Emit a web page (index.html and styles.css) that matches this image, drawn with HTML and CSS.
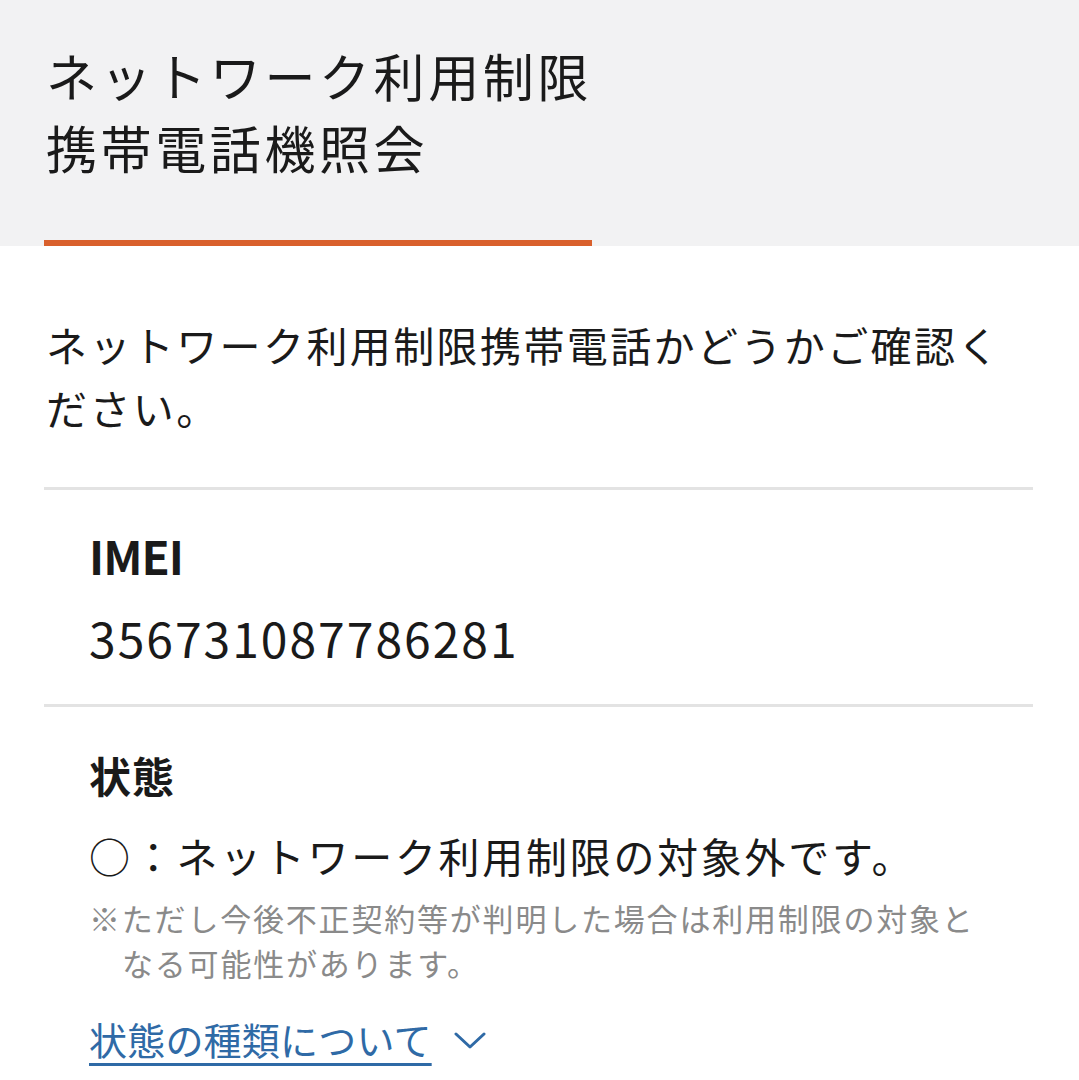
FILE: index.html
```html
<!DOCTYPE html>
<html lang="ja">
<head>
<meta charset="utf-8">
<title>ネットワーク利用制限携帯電話機照会</title>
<link rel="stylesheet" href="styles.css">
</head>
<body>
<header class="page-head">
  <h1 class="page-title">ネットワーク利用制限<br>携帯電話機照会</h1>
  <div class="accent"></div>
</header>
<main class="content">
  <p class="intro">ネットワーク利用制限携帯電話かどうかご確認ください。</p>
  <section class="item item-imei">
    <h2 class="label">IMEI</h2>
    <p class="value">356731087786281</p>
  </section>
  <section class="item item-status">
    <h2 class="label label-jp">状態</h2>
    <p class="status">○：ネットワーク利用制限の対象外です。</p>
    <p class="note">※ただし今後不正契約等が判明した場合は利用制限の対象となる可能性があります。</p>
    <a class="more" href="#"><span class="more-text">状態の種類について</span><svg class="chev" viewBox="0 0 32 18" width="32" height="18"><path d="M2 2 L16 15 L30 2" fill="none" stroke="#2f6aa6" stroke-width="3" stroke-linecap="round" stroke-linejoin="round"/></svg></a>
  </section>
</main>
</body>
</html>
```
FILE: styles.css
```css
html, body {
  margin: 0;
  padding: 0;
  background: #ffffff;
}
body {
  font-family: "Noto Sans CJK JP", "Noto Sans", sans-serif;
  color: #1a1a1a;
}
.page-head {
  background: #f2f2f3;
  padding: 39px 0 0 44px;
}
.page-title {
  margin: 0 0 0 2px;
  font-size: 51px;
  font-weight: 400;
  letter-spacing: 3.6px;
  line-height: 72px;
}
.accent {
  margin-top: 57px;
  width: 548px;
  height: 6px;
  background: #d9602c;
}
.content {
  padding: 0 46px 0 44px;
}
.intro {
  margin: 67px 0 0 2px;
  font-size: 41px;
  letter-spacing: 2.4px;
  line-height: 63px;
}
.item {
  border-top: 3px solid #e3e3e3;
  padding-left: 45px;
}
.intro + .item {
  margin-top: 48px;
}
.label {
  margin: 35px 0 0;
  font-size: 46px;
  font-weight: 700;
  line-height: 60px;
  letter-spacing: -1px;
}
.value {
  margin: 22px 0 37px;
  font-size: 48px;
  letter-spacing: 2px;
  line-height: 60px;
}
.label-jp {
  margin-top: 40px;
  font-size: 42px;
  line-height: 56px;
  letter-spacing: 1px;
}
.status {
  margin: 22px 0 0;
  font-size: 41px;
  letter-spacing: 2.7px;
  line-height: 60px;
}
.note {
  margin: 10px 0 0;
  padding-left: 33px;
  text-indent: -33px;
  font-size: 31px;
  letter-spacing: 1.8px;
  line-height: 45px;
  color: #8a8a8a;
  max-width: 870px;
}
.more {
  display: inline-flex;
  align-items: center;
  gap: 22px;
  margin-top: 26px;
  line-height: 56px;
  color: #2f6aa6;
  text-decoration: none;
}
.more-text {
  font-size: 38px;
  letter-spacing: 0.2px;
  text-decoration: underline;
  text-decoration-thickness: 3px;
  text-underline-offset: 8px;
}
.chev {
  display: block;
  margin-top: 4px;
}
```
